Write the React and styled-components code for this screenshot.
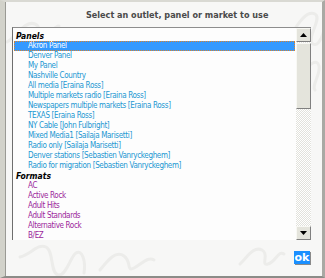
import styled, { createGlobalStyle } from "styled-components";

const GlobalStyle = createGlobalStyle`
  body {
    margin: 0;
    background: #fff;
  }
`;

// faint scribbles printed on the dialog paper
const scribbles = encodeURIComponent(
  `<svg xmlns="http://www.w3.org/2000/svg" width="320" height="276" fill="none" stroke="#ececea" stroke-width="3" stroke-linecap="round">
    <path d="M2 40c10-6 18-22 28-18s-4 20 6 16 12-14 18-14"/>
    <path d="M288 30c6-10 14-22 22-18s-10 26-2 30 14-20 12-28"/>
    <path d="M300 70c4-8 12-14 14-6s-8 20-4 24"/>
    <path d="M15 255c10-2 18-14 26-10s4 26 12 28 12-18 18-22 10 8 8 20"/>
    <path d="M95 268c8-10 16-20 24-14s2 16 10 12 14-12 20-8"/>
    <path d="M235 262c8-8 14-18 22-14s-2 16 6 14 10-14 16-10"/>
  </svg>`
);

const Frame = styled.div`
  width: 325px;
  height: 278px;
  box-sizing: border-box;
  background: #f7f7f6 url("data:image/svg+xml,${scribbles}") no-repeat 0 0;
  border-top: 2px solid #d9d9d3;
  border-left: 5px solid #d2d2ca;
  border-right: 3px solid #a9a9a4;
  border-bottom: 2px solid #8c8c88;
  box-shadow: inset 1px 0 0 #9a9a94;
  display: flex;
  flex-direction: column;
  font-family: "DejaVu Sans Condensed", "DejaVu Sans", sans-serif;
`;

const Title = styled.div`
  height: 25px;
  padding-left: 81px;
  line-height: 26px;
  font-size: 9px;
  font-weight: bold;
  color: #4a4a4a;
`;

const ListBox = styled.div`
  margin-left: 7px;
  width: 299px;
  height: 213px;
  box-sizing: border-box;
  border-top: 1px solid #8d8d8d;
  border-left: 1px solid #6e6e6e;
  background: #fdfdfd;
  display: flex;
`;

const Options = styled.div`
  flex: 1;
  padding: 3px 1px 0 1px;
  overflow: hidden;
`;

const Group = styled.div`
  height: 10px;
  line-height: 10px;
  padding-left: 2px;
  font-size: 8.5px;
  font-weight: bold;
  font-style: italic;
  color: #000;
`;

const Option = styled.div`
  height: 10px;
  line-height: 10px;
  padding-left: 14px;
  font-size: 8px;
  letter-spacing: -0.35px;
  white-space: nowrap;
  box-sizing: border-box;
  color: ${(p) => (p.$selected ? "#fff" : p.$tone)};
  background: ${(p) => (p.$selected ? "#3399ff" : "transparent")};
  outline: ${(p) => (p.$selected ? "1px dotted #d9822b" : "none")};
  outline-offset: -1px;
`;

const Scrollbar = styled.div`
  width: 15px;
  display: flex;
  flex-direction: column;
  background-color: #fafafa;
  background-image: repeating-conic-gradient(#e2e2dc 0 25%, #ffffff 0 50%);
  background-size: 2px 2px;
`;

const ArrowButton = styled.div`
  height: 14px;
  box-sizing: border-box;
  background: #e4e4dc;
  border: 1px solid;
  border-color: #f8f8f4 #808080 #808080 #f8f8f4;
  display: flex;
  align-items: center;
  justify-content: center;
`;

const Thumb = styled.div`
  height: 66px;
  margin-top: 1px;
  box-sizing: border-box;
  background: #e4e4dc;
  border: 1px solid;
  border-color: #f8f8f4 #808080 #808080 #f8f8f4;
`;

const Track = styled.div`
  flex: 1;
`;

const Footer = styled.div`
  display: flex;
  justify-content: flex-end;
  padding: 11px 12px 0 0;
`;

const OkButton = styled.div`
  width: 16px;
  height: 13px;
  background: #1a8fff;
  color: #fff;
  font-family: "DejaVu Sans", sans-serif;
  font-size: 11px;
  font-weight: bold;
  line-height: 13px;
  text-align: center;
  box-shadow: 1px 1px 0 #8a8a8a;
`;

const panels = [
  "Akron Panel",
  "Denver Panel",
  "My Panel",
  "Nashville Country",
  "All media [Eraina Ross]",
  "Multiple markets radio [Eraina Ross]",
  "Newspapers multiple markets [Eraina Ross]",
  "TEXAS [Eraina Ross]",
  "NY Cable [John Fulbright]",
  "Mixed Media1 [Sailaja Marisetti]",
  "Radio only [Sailaja Marisetti]",
  "Denver stations [Sebastien Vanryckeghem]",
  "Radio for migration [Sebastien Vanryckeghem]",
];

const formats = [
  "AC",
  "Active Rock",
  "Adult Hits",
  "Adult Standards",
  "Alternative Rock",
  "B/EZ",
];

const Arrow = ({ down }) => (
  <svg width="7" height="4" viewBox="0 0 7 4">
    <path d={down ? "M0 0h7L3.5 4z" : "M0 4h7L3.5 0z"} fill="#000" />
  </svg>
);

const App = () => {
  return (
    <>
      <GlobalStyle />
      <Frame>
        <Title>Select an outlet, panel or market to use</Title>
        <ListBox>
          <Options>
            <Group>Panels</Group>
            {panels.map((name, i) => (
              <Option key={name} $tone="#1b97d2" $selected={i === 0}>
                {name}
              </Option>
            ))}
            <Group>Formats</Group>
            {formats.map((name) => (
              <Option key={name} $tone="#9b1f9b">
                {name}
              </Option>
            ))}
          </Options>
          <Scrollbar>
            <ArrowButton>
              <Arrow />
            </ArrowButton>
            <Thumb />
            <Track />
            <ArrowButton>
              <Arrow down />
            </ArrowButton>
          </Scrollbar>
        </ListBox>
        <Footer>
          <OkButton>ok</OkButton>
        </Footer>
      </Frame>
    </>
  );
};

export default App;
